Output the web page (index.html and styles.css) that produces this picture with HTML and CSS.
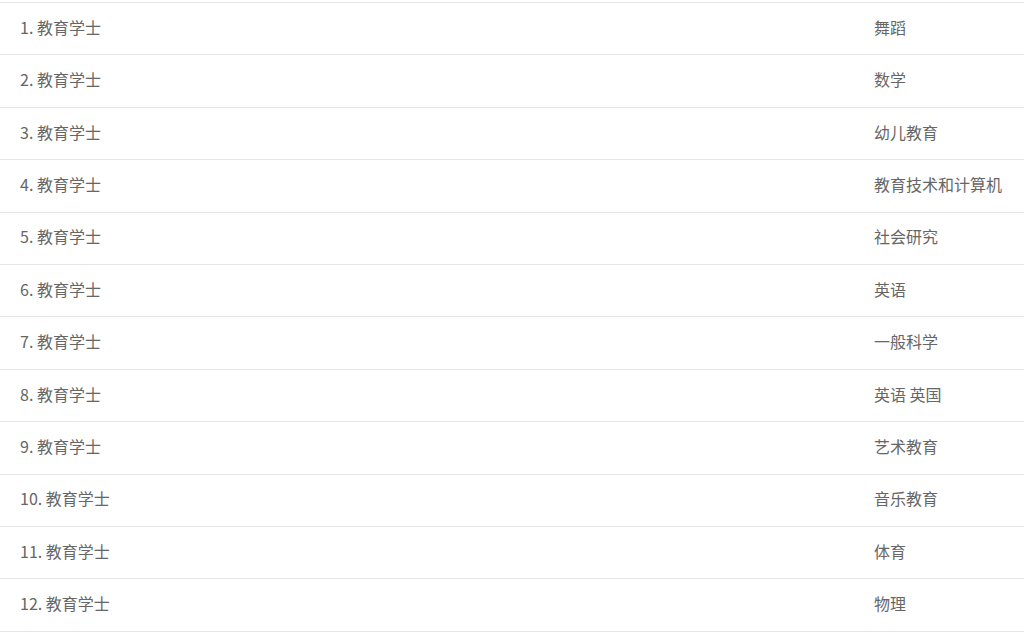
FILE: index.html
```html
<!DOCTYPE html>
<html lang="zh-CN">
<head>
<meta charset="utf-8">
<link rel="stylesheet" href="styles.css">
</head>
<body>
<table class="list">
<tbody>
<tr><td class="deg">1. 教育学士</td><td class="major">舞蹈</td></tr>
<tr><td class="deg">2. 教育学士</td><td class="major">数学</td></tr>
<tr><td class="deg">3. 教育学士</td><td class="major">幼儿教育</td></tr>
<tr><td class="deg">4. 教育学士</td><td class="major">教育技术和计算机</td></tr>
<tr><td class="deg">5. 教育学士</td><td class="major">社会研究</td></tr>
<tr><td class="deg">6. 教育学士</td><td class="major">英语</td></tr>
<tr><td class="deg">7. 教育学士</td><td class="major">一般科学</td></tr>
<tr><td class="deg">8. 教育学士</td><td class="major">英语 英国</td></tr>
<tr><td class="deg">9. 教育学士</td><td class="major">艺术教育</td></tr>
<tr><td class="deg">10. 教育学士</td><td class="major">音乐教育</td></tr>
<tr><td class="deg">11. 教育学士</td><td class="major">体育</td></tr>
<tr><td class="deg">12. 教育学士</td><td class="major">物理</td></tr>
</tbody>
</table>
</body>
</html>
```
FILE: styles.css
```css
html, body {
  margin: 0;
  padding: 0;
  background: #ffffff;
}
body {
  padding-top: 2px;
  font-family: "Noto Sans CJK SC", "Noto Sans", sans-serif;
  font-size: 16px;
  color: #666666;
}
.list {
  width: 1024px;
  border-collapse: collapse;
  table-layout: fixed;
}
.list td {
  height: 52.42px;
  padding: 0 0 4px 20px;
  border-top: 1px solid #e6e6e6;
  border-bottom: 1px solid #e6e6e6;
  vertical-align: middle;
  line-height: 20px;
  white-space: nowrap;
  box-sizing: border-box;
}
.deg {
  width: 854px;
}
.major {
  width: 170px;
}
```
